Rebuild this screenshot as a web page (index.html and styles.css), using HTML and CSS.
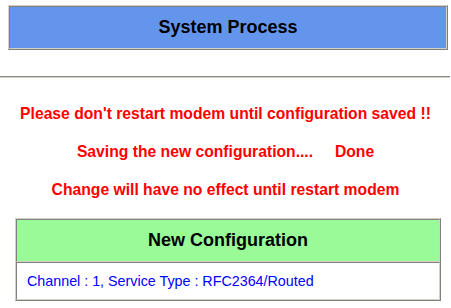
FILE: index.html
```html
<html>
<head>
	<title>System Process</title>
	<link rel="stylesheet" href="styles.css">
</head>
<body>

<div class="top">
<table class="box title">
	<tr><td class="head blue">System Process</td></tr>
</table>
</div>

<hr class="rule">

<div class="msg">
	<p>Please don't restart modem until configuration saved !!</p>
	<p>Saving the new configuration....&nbsp;&nbsp;&nbsp;&nbsp;&nbsp;Done</p>
	<p>Change will have no effect until restart modem</p>
</div>

<table class="box conf">
	<tr><td class="head green">New Configuration</td></tr>
	<tr><td class="info">Channel : 1, Service Type : RFC2364/Routed</td></tr>
</table>

</body>
</html>
```

FILE: styles.css
```css
body {
	margin: 0;
	background: #ffffff;
	font-family: "Liberation Sans", Arial, sans-serif;
}
.top {
	padding-top: 5px;
}
.box {
	border-collapse: separate;
	border-spacing: 0;
	border-style: solid;
	border-width: 1px;
	border-color: #d4d0c8 #808080 #808080 #d4d0c8;
}
.box td {
	border-style: solid;
	border-width: 1px;
	border-color: #808080 #d4d0c8 #d4d0c8 #808080;
	padding: 0;
}
.title {
	width: 440px;
	margin-left: 8px;
}
.head {
	height: 43px;
	text-align: center;
	font-size: 18px;
	font-weight: bold;
	color: #000000;
}
.blue {
	background: #6495ed;
}
.green {
	background: #98fb98;
}
.rule {
	margin: 26px 1px 0 0;
	height: 0;
	border-style: solid;
	border-width: 1px 0 1px 0;
	border-color: #8a8a86 #d4d0c8 #d4d0c8 #d4d0c8;
}
.msg {
	margin-top: 17px;
	text-align: center;
	color: #ff0000;
	font-size: 15.7px;
	font-weight: bold;
}
.msg p {
	margin: 0;
	line-height: 38px;
}
.conf {
	width: 426px;
	margin: 9px 0 0 15px;
}
.info {
	height: 38px;
	padding-left: 10px !important;
	font-size: 14.3px;
	color: #0000ff;
	background: #ffffff;
}
```
